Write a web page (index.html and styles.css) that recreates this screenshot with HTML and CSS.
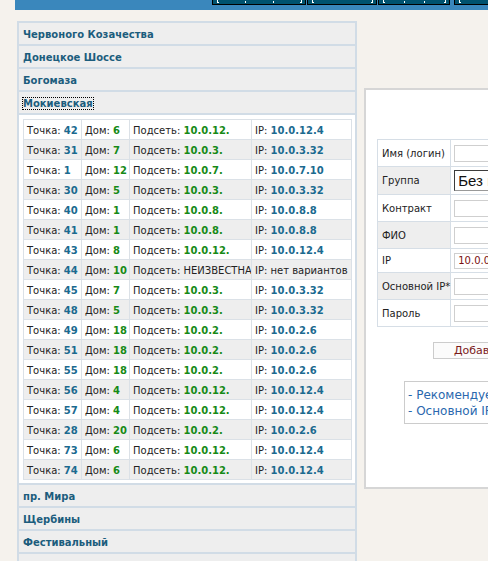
FILE: index.html
```html
<!DOCTYPE html>
<html lang="ru">
<head>
<meta charset="utf-8">
<title>Точки</title>
<link rel="stylesheet" href="styles.css">
</head>
<body>
<div class="topbar">
  <div class="tabs">
    <span class="tab tab-1"><i class="mk br-l"></i><i class="mk"></i><i class="mk"></i><i class="mk br-r"></i></span>
    <span class="tab tab-2"><i class="mk br-l"></i><i class="mk br-r"></i></span>
    <span class="tab tab-3"><i class="mk br-l"></i><i class="mk"></i><i class="mk"></i><i class="mk br-r"></i></span>
    <span class="tab tab-4"><i class="mk br-l"></i></span>
  </div>
</div>
<div class="main">
  <div class="streets">
    <div class="street">Червоного Козачества</div>
    <div class="street">Донецкое Шоссе</div>
    <div class="street">Богомаза</div>
    <div class="street"><span class="focus">Мокиевская</span></div>
    <div class="points">
      <table class="points-table">
        <colgroup><col class="c1"><col class="c2"><col class="c3"><col class="c4"></colgroup>
        <tr><td>Точка: <b class="n">42</b></td><td>Дом: <b class="g">6</b></td><td>Подсеть: <b class="g">10.0.12.</b></td><td>IP: <b class="n">10.0.12.4</b></td></tr>
        <tr><td>Точка: <b class="n">31</b></td><td>Дом: <b class="g">7</b></td><td>Подсеть: <b class="g">10.0.3.</b></td><td>IP: <b class="n">10.0.3.32</b></td></tr>
        <tr><td>Точка: <b class="n">1</b></td><td>Дом: <b class="g">12</b></td><td>Подсеть: <b class="g">10.0.7.</b></td><td>IP: <b class="n">10.0.7.10</b></td></tr>
        <tr><td>Точка: <b class="n">30</b></td><td>Дом: <b class="g">5</b></td><td>Подсеть: <b class="g">10.0.3.</b></td><td>IP: <b class="n">10.0.3.32</b></td></tr>
        <tr><td>Точка: <b class="n">40</b></td><td>Дом: <b class="g">1</b></td><td>Подсеть: <b class="g">10.0.8.</b></td><td>IP: <b class="n">10.0.8.8</b></td></tr>
        <tr><td>Точка: <b class="n">41</b></td><td>Дом: <b class="g">1</b></td><td>Подсеть: <b class="g">10.0.8.</b></td><td>IP: <b class="n">10.0.8.8</b></td></tr>
        <tr><td>Точка: <b class="n">43</b></td><td>Дом: <b class="g">8</b></td><td>Подсеть: <b class="g">10.0.12.</b></td><td>IP: <b class="n">10.0.12.4</b></td></tr>
        <tr><td>Точка: <b class="n">44</b></td><td>Дом: <b class="g">10</b></td><td>Подсеть: НЕИЗВЕСТНА</td><td>IP: нет вариантов</td></tr>
        <tr><td>Точка: <b class="n">45</b></td><td>Дом: <b class="g">7</b></td><td>Подсеть: <b class="g">10.0.3.</b></td><td>IP: <b class="n">10.0.3.32</b></td></tr>
        <tr><td>Точка: <b class="n">48</b></td><td>Дом: <b class="g">5</b></td><td>Подсеть: <b class="g">10.0.3.</b></td><td>IP: <b class="n">10.0.3.32</b></td></tr>
        <tr><td>Точка: <b class="n">49</b></td><td>Дом: <b class="g">18</b></td><td>Подсеть: <b class="g">10.0.2.</b></td><td>IP: <b class="n">10.0.2.6</b></td></tr>
        <tr><td>Точка: <b class="n">51</b></td><td>Дом: <b class="g">18</b></td><td>Подсеть: <b class="g">10.0.2.</b></td><td>IP: <b class="n">10.0.2.6</b></td></tr>
        <tr><td>Точка: <b class="n">55</b></td><td>Дом: <b class="g">18</b></td><td>Подсеть: <b class="g">10.0.2.</b></td><td>IP: <b class="n">10.0.2.6</b></td></tr>
        <tr><td>Точка: <b class="n">56</b></td><td>Дом: <b class="g">4</b></td><td>Подсеть: <b class="g">10.0.12.</b></td><td>IP: <b class="n">10.0.12.4</b></td></tr>
        <tr><td>Точка: <b class="n">57</b></td><td>Дом: <b class="g">4</b></td><td>Подсеть: <b class="g">10.0.12.</b></td><td>IP: <b class="n">10.0.12.4</b></td></tr>
        <tr><td>Точка: <b class="n">28</b></td><td>Дом: <b class="g">20</b></td><td>Подсеть: <b class="g">10.0.2.</b></td><td>IP: <b class="n">10.0.2.6</b></td></tr>
        <tr><td>Точка: <b class="n">73</b></td><td>Дом: <b class="g">6</b></td><td>Подсеть: <b class="g">10.0.12.</b></td><td>IP: <b class="n">10.0.12.4</b></td></tr>
        <tr><td>Точка: <b class="n">74</b></td><td>Дом: <b class="g">6</b></td><td>Подсеть: <b class="g">10.0.12.</b></td><td>IP: <b class="n">10.0.12.4</b></td></tr>
      </table>
    </div>
    <div class="street">пр. Мира</div>
    <div class="street">Щербины</div>
    <div class="street">Фестивальный</div>
    <div class="street"></div>
  </div>

  <div class="form-panel">
    <table class="form-table">
      <tr><td class="lbl">Имя (логин)</td><td class="val"><span class="field"></span></td></tr>
      <tr class="tall"><td class="lbl">Группа</td><td class="val"><span class="select">Без группы</span></td></tr>
      <tr><td class="lbl">Контракт</td><td class="val"><span class="field"></span></td></tr>
      <tr><td class="lbl">ФИО</td><td class="val"><span class="field"></span></td></tr>
      <tr class="short"><td class="lbl">IP</td><td class="val"><span class="field field-ip">10.0.0.1</span></td></tr>
      <tr><td class="lbl">Основной IP*</td><td class="val"><span class="field"></span></td></tr>
      <tr><td class="lbl">Пароль</td><td class="val"><span class="field"></span></td></tr>
    </table>
    <div class="actions"><span class="btn">Добавить пользователя</span></div>
    <div class="notes">
      <div class="note">- Рекомендуется использовать латиницу</div>
      <div class="note">- Основной IP* - адрес для привязки</div>
    </div>
  </div>
</div>
</body>
</html>
```

FILE: styles.css
```css
html, body {
  margin: 0;
  padding: 0;
  overflow: hidden;
  height: 100%;
}
body {
  background: #f5f2ed;
  font-family: "DejaVu Sans", Verdana, sans-serif;
  font-size: 10px;
  color: #222;
}

/* top bar */
.topbar {
  margin-left: 15px;
  height: 10px;
  background: #3a87bc;
}
.tabs {
  display: flex;
  margin-left: 197px;
}
.tab {
  display: flex;
  justify-content: space-between;
  align-items: flex-end;
  box-sizing: border-box;
  height: 5px;
  padding: 0 2px 1px 2px;
  background: #00526f;
  border: 1px solid #000;
  border-top: none;
  margin-right: 1px;
  flex-shrink: 0;
}
.tab-1 { width: 94px; padding-left: 4px; padding-right: 3px; }
.tab-2 { width: 70px; padding-left: 4px; padding-right: 3px; }
.tab-3 { width: 72px; padding-left: 4px; padding-right: 3px; }
.tab-4 { width: 60px; margin-left: 3px; padding-left: 4px; }
.mk {
  display: block;
  width: 1px;
  height: 2px;
  background: #fff;
}
.br-l, .br-r {
  width: 2px;
  height: 3px;
  box-sizing: border-box;
  background: transparent;
}
.br-l { border-left: 1px solid #fff; border-bottom: 1px solid #fff; }
.br-r { border-right: 1px solid #fff; border-bottom: 1px solid #fff; }

/* layout */
.main {
  display: flex;
  align-items: flex-start;
}

/* streets accordion */
.streets {
  margin-left: 17px;
  margin-top: 11px;
  width: 340px;
  box-sizing: border-box;
  flex-shrink: 0;
  background: #d1dce6;
  padding: 2px;
  display: flex;
  flex-direction: column;
  gap: 2px;
}
.street {
  height: 20px;
  padding-top: 1px;
  line-height: 21px;
  background: #eeeeee;
  padding-left: 4px;
  font-weight: bold;
  color: #1c5d7d;
  white-space: nowrap;
}
.focus {
  outline: 1px dotted #000;
  outline-offset: 0;
}
.points {
  background: #fff;
  padding: 4px 4px 3px 4px;
}
.points-table {
  border-collapse: collapse;
  table-layout: fixed;
  width: 328px;
  border: 1px solid #d5dde5;
}
.points-table .c1 { width: 58px; }
.points-table .c2 { width: 48px; }
.points-table .c3 { width: 122px; }
.points-table .c4 { width: 100px; }
.points-table td {
  height: 18px;
  padding: 1px 2px 0 3px;
  border: 1px solid #dbe1e7;
  white-space: nowrap;
  overflow: hidden;
  color: #222;
}
.points-table tr:nth-child(even) td {
  background: #eeeeee;
}
.n { color: #1b6a8f; }
.g { color: #168a16; }

/* form panel */
.form-panel {
  margin-left: 7px;
  margin-top: 78px;
  width: 300px;
  flex-shrink: 0;
  background: #fff;
  border: 2px solid #d6d6d6;
  padding: 49px 0 63px 11px;
}
.form-table {
  border-collapse: collapse;
  border: 1px solid #d6dee6;
  width: 220px;
}
.form-table td {
  border: 1px solid #d6dee6;
  height: 26px;
  padding: 0;
}
.form-table tr.tall td { height: 27px; }
.form-table tr.short td { height: 23px; }
.form-table tr:nth-child(even) .lbl { background: #eeeeee; }
.lbl {
  width: 70px;
  padding-left: 4px !important;
  color: #222;
  white-space: nowrap;
}
.val {
  padding-left: 3px !important;
}
.field {
  display: block;
  width: 140px;
  height: 15px;
  border: 1px solid #cfcfcf;
  background: #fff;
  font-size: 10px;
  line-height: 15px;
  padding-left: 3px;
}
.field-ip {
  color: #7a1010;
  height: 14px;
  line-height: 14px;
}
.select {
  display: block;
  width: 140px;
  height: 19px;
  line-height: 19px;
  border: 1px solid #3c3c3c;
  border-right-color: #999;
  border-bottom-color: #999;
  font-family: "Liberation Sans", Arial, sans-serif;
  font-size: 15px;
  color: #111;
  padding-left: 3px;
  white-space: nowrap;
}
.actions {
  margin-top: 15px;
  margin-left: 56px;
}
.btn {
  display: inline-block;
  height: 15px;
  line-height: 15px;
  border: 1px solid #cccccc;
  background: #fbfbfb;
  color: #7a1a1a;
  padding: 0 10px 0 20px;
  white-space: nowrap;
  font-size: 11px;
}
.notes {
  margin-top: 22px;
  margin-left: 27px;
  border: 1px solid #cccccc;
  padding: 5px 3px 4px 3px;
  font-size: 12px;
  line-height: 16px;
  color: #2a68ae;
  white-space: nowrap;
}
```
